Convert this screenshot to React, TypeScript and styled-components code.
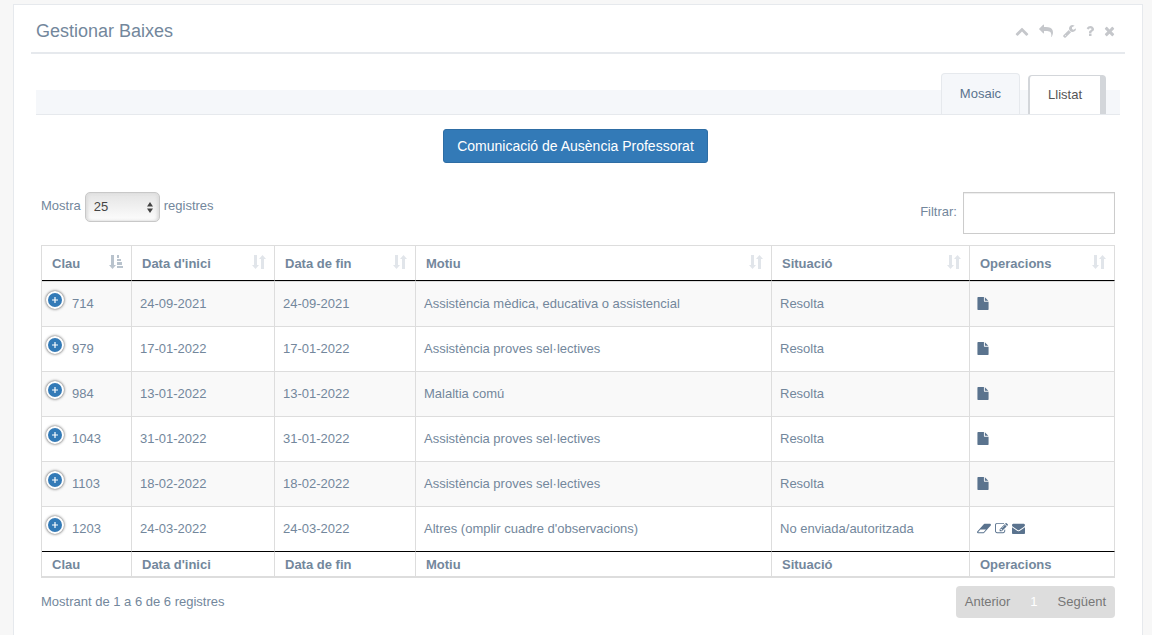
import React from "react";
import styled, { createGlobalStyle } from "styled-components";

const text = "#73879C";
const link = "#5A738E";
const line = "#E6E9ED";
const grid = "#DDDDDD";

const GlobalStyle = createGlobalStyle`
  *, *::before, *::after { box-sizing: border-box; }
  body {
    margin: 0;
    background: #F7F7F7;
    color: ${text};
    font: 13px/20px "Helvetica Neue", "Liberation Sans", Arial, sans-serif;
  }
  button, input, select { font: inherit; color: inherit; }
`;

const Page = styled.main`
  display: flex;
  min-height: 100vh;
  padding: 4px 9px 0 13px;
`;

const Panel = styled.section`
  flex: 1;
  min-width: 0;
  padding: 0 17px 16px;
  background: #fff;
  border: 1px solid ${line};
  border-bottom: 0;
`;

const PanelHeader = styled.header`
  display: flex;
  align-items: center;
  justify-content: space-between;
  height: 49px;
  padding: 4px 5px 0;
  border-bottom: 2px solid ${line};
`;

const Title = styled.h2`
  margin: 0;
  font-size: 18px;
  line-height: 20px;
  font-weight: 400;
`;

const Toolbox = styled.div`
  display: flex;
`;

const ToolButton = styled.button`
  display: flex;
  padding: 5px;
  border: 0;
  background: none;
  color: #C5C7CB;
  cursor: pointer;
`;

const Content = styled.div`
  padding: 36px 5px 0;
`;

const TabBar = styled.nav`
  display: flex;
  align-items: flex-end;
  justify-content: flex-end;
  gap: 8px;
  height: 25px;
  padding-right: 14px;
  background: #F5F7FA;
  border-bottom: 1px solid ${line};
`;

const Tab = styled.a<{ $active?: boolean }>`
  flex: none;
  height: ${(p) => (p.$active ? 39 : 41)}px;
  padding: ${(p) => (p.$active ? "9px 18px" : "10px 18px")};
  border: solid ${(p) => (p.$active ? "#D3D6DA" : line)};
  border-width: ${(p) => (p.$active ? "1px 6px 0 2px" : "1px 1px 0")};
  border-radius: 4px 4px 0 0;
  background: ${(p) => (p.$active ? "#fff" : "#F5F7FA")};
  color: ${(p) => (p.$active ? "#555" : link)};
  text-decoration: none;
`;

const Actions = styled.div`
  display: flex;
  justify-content: center;
  padding: 14px 5px 29px 0;
`;

const PrimaryButton = styled.button`
  padding: 6px 13px;
  border: 1px solid #2E6DA4;
  border-radius: 3px;
  background: #337AB7;
  color: #fff;
  font-size: 14px;
  cursor: pointer;
`;

const Controls = styled.div`
  display: flex;
  align-items: flex-start;
  justify-content: space-between;
  padding: 0 5px;
  margin-bottom: 11px;
`;

const Field = styled.label`
  display: flex;
  align-items: center;
  gap: 4px;
`;

const FieldText = styled.span`
  padding-bottom: 3px;
`;

const SelectBox = styled.span`
  position: relative;
  display: flex;

  svg {
    position: absolute;
    right: 7px;
    top: 10px;
    pointer-events: none;
  }
`;

const Select = styled.select`
  appearance: none;
  width: 75px;
  height: 30px;
  padding: 0 8px;
  border: 1px solid #C8C8C8;
  border-radius: 5px;
  background: linear-gradient(#E4E4E4, #FDFDFD);
  box-shadow: inset 2px 0 3px #ddd, inset -2px 0 3px #ddd;
  color: #444;
`;

const SearchInput = styled.input`
  width: 152px;
  height: 42px;
  padding: 6px 10px;
  margin-left: 2px;
  border: 1px solid #CCC;
  background: #fff;
  box-shadow: inset 0 1px 1px rgba(0, 0, 0, 0.075);
`;

const TableWrap = styled.div`
  padding: 0 5px;
`;

const Table = styled.table`
  width: 100%;
  table-layout: fixed;
  border-collapse: separate;
  border-spacing: 0;
  border: solid ${grid};
  border-width: 1px 0 1px 1px;
`;

const Col = styled.col<{ $width?: number }>`
  width: ${(p) => (p.$width ? `${p.$width}px` : "auto")};
`;

const HeadCell = styled.th`
  height: 35px;
  padding: 1px 10px 0;
  border-right: 1px solid ${grid};
  border-bottom: 1px solid #000;
  text-align: left;
`;

const HeadInner = styled.span`
  display: flex;
  align-items: center;
  justify-content: space-between;
  padding-right: 2px;

  svg { margin: 0 -4px 3px 0; }
`;

const FootCell = styled.th`
  height: 26px;
  padding: 2px 10px 0;
  border: solid ${grid};
  border-width: 1px 1px 1px 0;
  border-top-color: #000;
  text-align: left;
`;

const Row = styled.tr`
  &:nth-child(odd) { background: #F9F9F9; }
`;

const Cell = styled.td`
  height: 45px;
  padding: 0 8px;
  border: solid ${grid};
  border-width: 1px 1px 0 0;
`;

const KeyCell = styled(Cell)`
  padding: 0 4px;
`;

const KeyInner = styled.div`
  display: flex;
  align-items: center;
  gap: 8px;
`;

const Expand = styled.button`
  display: flex;
  width: 18px;
  height: 18px;
  padding: 3px;
  margin-bottom: 8px;
  border: 2px solid #fff;
  border-radius: 50%;
  background: #337AB7;
  box-shadow: 0 0 3px #444;
  color: #fff;
  cursor: pointer;
`;

const Operations = styled.div`
  display: flex;
  gap: 4px;
  margin-left: -1px;
  padding-bottom: 2px;
`;

const OperationLink = styled.a`
  display: flex;
  color: ${link};
`;

const TableFooter = styled.div`
  display: flex;
  justify-content: space-between;
  padding: 8px 5px 0;
`;

const Info = styled.div`
  padding-top: 6px;
`;

const Pager = styled.div`
  display: flex;
  gap: 2px;
  overflow: hidden;
  border-radius: 4px;
  background: #DDD;
`;

const PageButton = styled.button<{ $current?: boolean }>`
  padding: 6px 9px;
  border: 0;
  background: none;
  color: ${(p) => (p.$current ? "#fff" : "#777")};
`;

type Glyph = { box: string; width: number; height?: number; d: string };

const glyphs: Record<string, Glyph> = {
  up: { box: "0 0 1792 1792", width: 14, d: "M1683 1331l-166 165q-19 19-45 19t-45-19l-531-531-531 531q-19 19-45 19t-45-19l-166-165q-19-19-19-45.500t19-45.500l742-741q19-19 45-19t45 19l742 741q19 19 19 45.500t-19 45.500z" },
  reply: { box: "0 0 1792 1792", width: 14, d: "M1792 1120q0 166-127 451-3 7-10.500 24t-13.500 30-13 22q-12 17-28 17-15 0-23.500-10t-8.500-25q0-9 2.500-26.500t2.500-23.500q5-68 5-123 0-101-17.500-181t-48.500-138.500-80-101-105.500-69.500-133-42.500-154-21.500-175.500-6h-224v256q0 26-19 45t-45 19-45-19l-512-512q-19-19-19-45t19-45l512-512q19-19 45-19t45 19 19 45v256h224q713 0 875 403 53 134 53 333z" },
  wrench: { box: "64 0 1664 1792", width: 13, d: "M448 1472q0-26-19-45t-45-19-45 19-19 45 19 45 45 19 45-19 19-45zm644-420l-682 682q-37 37-90 37-52 0-91-37l-106-108q-38-36-38-90 0-53 38-91l681-681q39 98 114.500 173.500t173.500 114.500zm634-435q0 39-23 106-47 134-164.500 217.500t-258.500 83.500q-185 0-316.500-131.500t-131.500-316.500 131.500-316.500 316.500-131.500q58 0 121.500 16.500t107.500 46.500q16 11 16 28t-16 28l-293 169v224l193 107q5-3 79-48.500t135.500-81 70.500-35.500q15 0 23.500 10t8.500 25z" },
  question: { box: "384 0 1024 1792", width: 8, d: "M1088 1256v240q0 16-12 28t-28 12h-240q-16 0-28-12t-12-28v-240q0-16 12-28t28-12h240q16 0 28 12t12 28zm316-600q0 54-15.500 101t-35 76.500-55 59.500-57.500 43.500-61 35.500q-41 23-68.500 65t-27.500 67q0 17-12 32.500t-28 15.500h-240q-15 0-25.500-18.500t-10.500-37.500v-45q0-83 65-156.500t143-108.500q59-27 84-56t25-76q0-42-46.500-74t-107.500-32q-65 0-108 29-35 25-107 115-13 16-31 16-12 0-25-8l-164-125q-13-10-15.500-25t5.500-28q160-266 464-266 80 0 161 31t146 83 106 127.500 41 158.500z" },
  close: { box: "192 0 1408 1792", width: 11, d: "M1490 1322q0 40-28 68l-136 136q-28 28-68 28t-68-28l-294-294-294 294q-28 28-68 28t-68-28l-136-136q-28-28-28-68t28-68l294-294-294-294q-28-28-28-68t28-68l136-136q28-28 68-28t68 28l294 294 294-294q28-28 68-28t68 28l136 136q28 28 28 68t-28 68l-294 294 294 294q28 28 28 68z" },
  file: { box: "128 0 1536 1792", width: 12, height: 13, d: "M1152 512v-472q22 14 36 28l408 408q14 14 28 36h-472zm-128 32q0 40 28 68t68 28h544v1056q0 40-28 68t-68 28h-1344q-40 0-68-28t-28-68v-1600q0-40 28-68t68-28h800v544z" },
  eraser: { box: "64 0 1920 1792", width: 14, height: 13, d: "M960 1408l336-384h-768l-336 384h768zm1013-1077q15 34 9.500 71.500t-30.500 65.500l-896 1024q-38 44-96 44h-768q-38 0-69.500-20.500t-47.500-54.500q-15-34-9.500-71.500t30.500-65.500l896-1024q38-44 96-44h768q38 0 69.500 20.500t47.500 54.500z" },
  edit: { box: "0 0 1792 1792", width: 13, height: 13, d: "M888 1184l116-116-152-152-116 116v56h96v96h56zm440-720q-16-16-33 1l-350 350q-17 17-1 33t33-1l350-350q17-17 1-33zm80 594v190q0 119-84.500 203.500t-203.500 84.500h-832q-119 0-203.500-84.500t-84.500-203.500v-832q0-119 84.500-203.500t203.500-84.500h832q63 0 117 25 15 7 18 23 3 17-9 29l-49 49q-14 14-32 8-23-6-45-6h-832q-66 0-113 47t-47 113v832q0 66 47 113t113 47h832q66 0 113-47t47-113v-126q0-13 9-22l64-64q15-15 35-7t20 29zm-96-738l288 288-672 672h-288v-288zm444 132l-92 92-288-288 92-92q28-28 68-28t68 28l152 152q28 28 28 68t-28 68z" },
  mail: { box: "0 0 1792 1792", width: 13, height: 13, d: "M1792 710v794q0 66-47 113t-113 47h-1472q-66 0-113-47t-47-113v-794q44 49 101 87 362 246 497 345 57 42 92.500 65.500t94.500 48 110 24.500h2q51 0 110-24.500t94.500-48 92.500-65.500q170-123 498-345 57-39 100-87zm0-294q0 79-49 151t-122 123q-376 261-468 325-10 7-42.500 31t-54 38.500-52 32.500-57.500 27-50 9h-2q-23 0-50-9t-57.500-27-52-32.500-54-38.500-42.500-31q-91-64-262-182.500t-205-142.500q-62-42-117-115.500t-55-136.500q0-78 41.500-130t118.500-52h1472q65 0 112.500 47t47.500 113z" },
};

function Icon({ name }: { name: string }) {
  const g = glyphs[name];
  return (
    <svg width={g.width} height={g.height ?? 14} viewBox={g.box} fill="currentColor" aria-hidden="true">
      <path d={g.d} />
    </svg>
  );
}

function SortIcon({ sorted }: { sorted?: boolean }) {
  return (
    <svg width="14" height="14" viewBox="0 0 14 14" fill={sorted ? "#B9C3CD" : "#E1E5EA"} aria-hidden="true">
      <path d="M2 0h3v10h2L3.500 14 0 10h2z" />
      {sorted ? (
        <path d="M8 0h2v3H8zM8 4h4v2H8zM8 7h5v3H8zM8 11h6v2H8z" />
      ) : (
        <path d="M9 14h3V4h2L10.500 0 7 4h2z" />
      )}
    </svg>
  );
}

const tools = [
  ["up", "Plegar"],
  ["reply", "Tornar"],
  ["wrench", "Configurar"],
  ["question", "Ajuda"],
  ["close", "Tancar"],
];

const columns: { label: string; width?: number }[] = [
  { label: "Clau", width: 90 },
  { label: "Data d'inici", width: 143 },
  { label: "Data de fin", width: 141 },
  { label: "Motiu" },
  { label: "Situació", width: 198 },
  { label: "Operacions", width: 145 },
];

const rows = [
  { id: 714, date: "24-09-2021", reason: "Assistència mèdica, educativa o assistencial", sent: true },
  { id: 979, date: "17-01-2022", reason: "Assistència proves sel·lectives", sent: true },
  { id: 984, date: "13-01-2022", reason: "Malaltia comú", sent: true },
  { id: 1043, date: "31-01-2022", reason: "Assistència proves sel·lectives", sent: true },
  { id: 1103, date: "18-02-2022", reason: "Assistència proves sel·lectives", sent: true },
  { id: 1203, date: "24-03-2022", reason: "Altres (omplir cuadre d'observacions)", sent: false },
];

const labels: Record<string, string> = {
  file: "Document",
  eraser: "Esborrar",
  edit: "Editar",
  mail: "Enviar",
};

export default function App() {
  return (
    <Page>
      <GlobalStyle />
      <Panel>
        <PanelHeader>
          <Title>Gestionar Baixes</Title>
          <Toolbox>
            {tools.map(([name, label]) => (
              <ToolButton key={name} type="button" aria-label={label}>
                <Icon name={name} />
              </ToolButton>
            ))}
          </Toolbox>
        </PanelHeader>
        <Content>
          <TabBar>
            <Tab href="#mosaic">Mosaic</Tab>
            <Tab href="#llistat" $active aria-current="page">Llistat</Tab>
          </TabBar>
          <Actions>
            <PrimaryButton type="button">Comunicació de Ausència Professorat</PrimaryButton>
          </Actions>
          <Controls>
            <Field>
              <FieldText>Mostra</FieldText>
              <SelectBox>
                <Select defaultValue="25">
                  <option>10</option>
                  <option>25</option>
                  <option>50</option>
                </Select>
                <svg width="6" height="11" viewBox="0 0 6 11" fill="#444" aria-hidden="true">
                  <path d="M0 4.500L3 0l3 4.500zM0 6.500h6L3 11z" />
                </svg>
              </SelectBox>
              <FieldText>registres</FieldText>
            </Field>
            <Field>
              <FieldText>Filtrar:</FieldText>
              <SearchInput type="search" />
            </Field>
          </Controls>
          <TableWrap>
            <Table>
              <colgroup>
                {columns.map((c) => <Col key={c.label} $width={c.width} />)}
              </colgroup>
              <thead>
                <tr>
                  {columns.map((c, i) => (
                    <HeadCell key={c.label} scope="col">
                      <HeadInner>{c.label}<SortIcon sorted={i === 0} /></HeadInner>
                    </HeadCell>
                  ))}
                </tr>
              </thead>
              <tbody>
                {rows.map((r) => (
                  <Row key={r.id}>
                    <KeyCell>
                      <KeyInner>
                        <Expand type="button" aria-label="Mostrar detalls">
                          <svg width="8" height="8" viewBox="0 0 8 8" stroke="currentColor" strokeWidth="1.2" aria-hidden="true">
                            <path d="M4 1v6M1 4h6" />
                          </svg>
                        </Expand>
                        {r.id}
                      </KeyInner>
                    </KeyCell>
                    <Cell>{r.date}</Cell>
                    <Cell>{r.date}</Cell>
                    <Cell>{r.reason}</Cell>
                    <Cell>{r.sent ? "Resolta" : "No enviada/autoritzada"}</Cell>
                    <Cell>
                      <Operations>
                        {(r.sent ? ["file"] : ["eraser", "edit", "mail"]).map((name) => (
                          <OperationLink key={name} href={`#${name}-${r.id}`} aria-label={labels[name]}>
                            <Icon name={name} />
                          </OperationLink>
                        ))}
                      </Operations>
                    </Cell>
                  </Row>
                ))}
              </tbody>
              <tfoot>
                <tr>
                  {columns.map((c) => <FootCell key={c.label}>{c.label}</FootCell>)}
                </tr>
              </tfoot>
            </Table>
          </TableWrap>
          <TableFooter>
            <Info>Mostrant de 1 a 6 de 6 registres</Info>
            <Pager>
              <PageButton type="button">Anterior</PageButton>
              <PageButton type="button" $current aria-current="page">1</PageButton>
              <PageButton type="button">Següent</PageButton>
            </Pager>
          </TableFooter>
        </Content>
      </Panel>
    </Page>
  );
}
